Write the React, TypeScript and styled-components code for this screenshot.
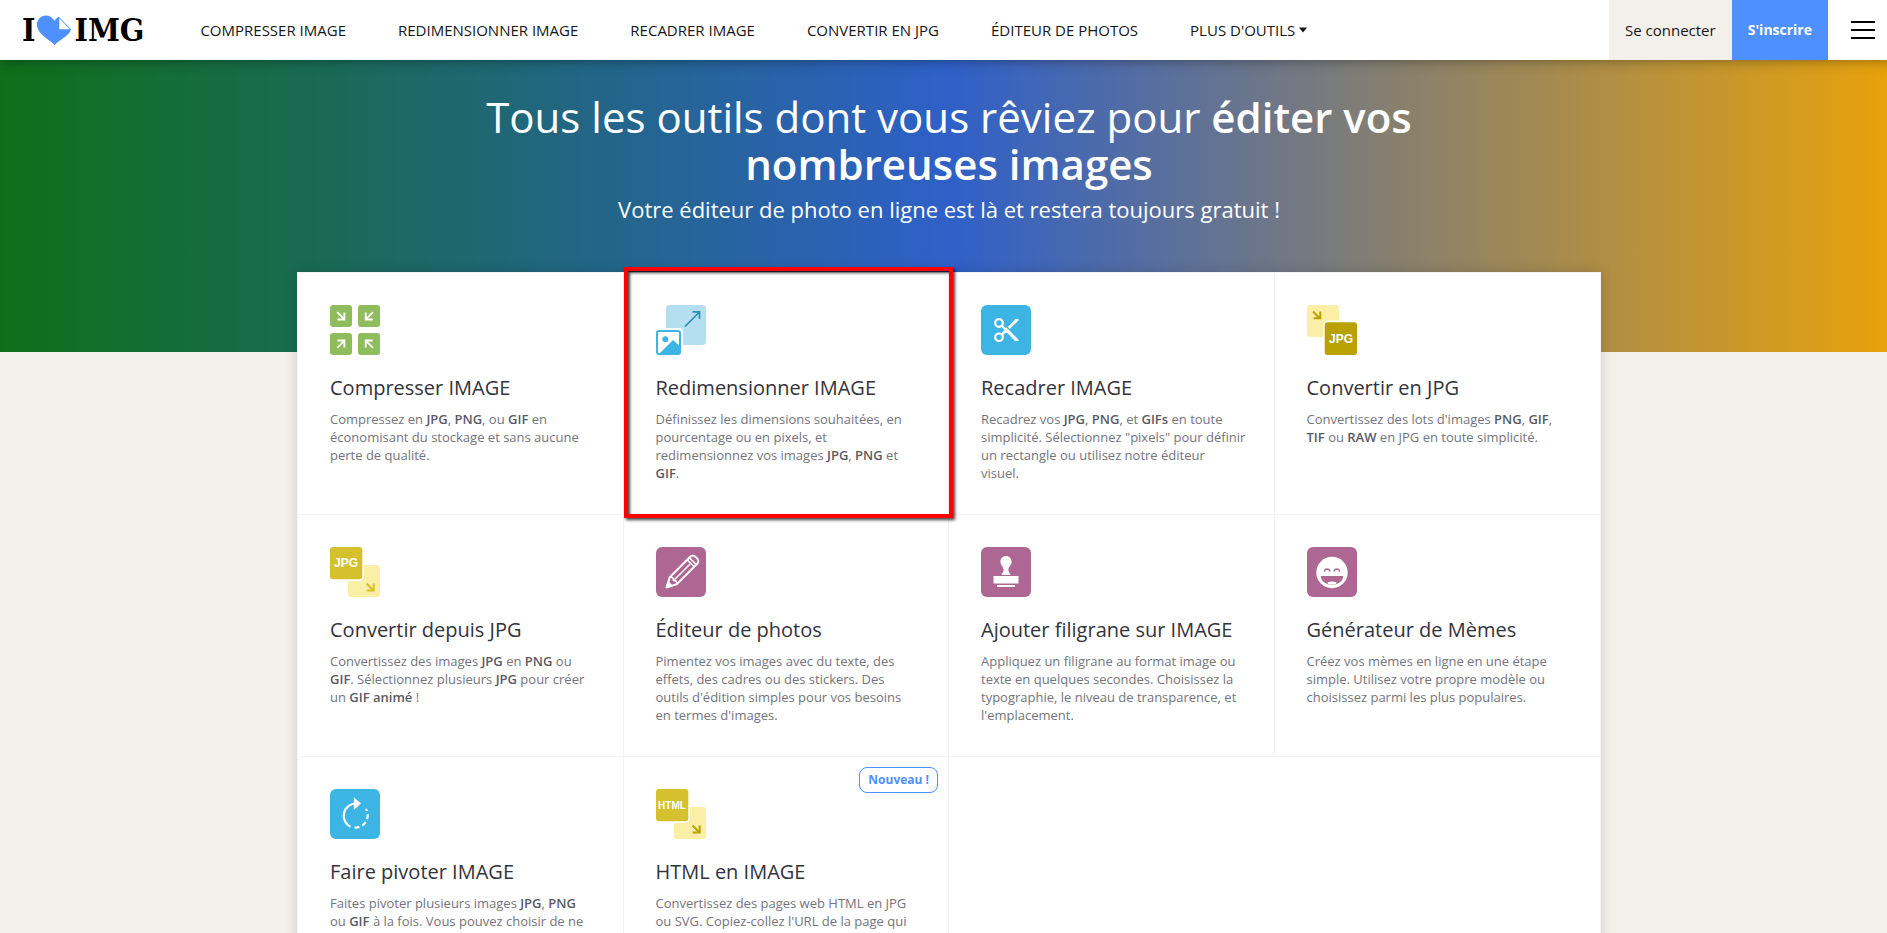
import React from "react";
import styled, { createGlobalStyle } from "styled-components";

const colors = {
  brand: "#4d90fe",
  sand: "#f3f0ec",
  blue: "#3db5e4",
  paleBlue: "#b4dff0",
  inkBlue: "#2b8cb4",
  green: "#8fbc5d",
  purple: "#ad6792",
  mustard: "#d5c02e",
  darkMustard: "#b8a100",
  paleMustard: "#fbeea6",
  line: "#f3f3f3",
};

const GlobalStyle = createGlobalStyle`
  *, *::before, *::after { box-sizing: border-box; }
  body {
    margin: 0;
    overflow-x: hidden;
    background: ${colors.sand};
    font-family: "Open Sans", "Noto Sans", sans-serif;
    color: #161616;
  }
`;

const Page = styled.div`
  width: calc(100% + 11px);
`;

const Header = styled.header`
  position: relative;
  z-index: 2;
  display: flex;
  align-items: stretch;
  height: 60px;
  padding-left: 22px;
  background: #fff;
  box-shadow: 0 0 12px rgba(0, 0, 0, 0.4);
`;

const Logo = styled.a`
  display: flex;
  align-items: center;
  gap: 2px;
  margin-right: 56px;
  color: #000;
  font: 700 32px/60px "DejaVu Serif Condensed", "DejaVu Serif", serif;
  text-decoration: none;
`;

const Nav = styled.nav`
  display: flex;
  flex: 1;
  gap: 52px;
`;

const NavLink = styled.a`
  color: #161616;
  font-size: 15px;
  line-height: 60px;
  text-decoration: none;
  white-space: nowrap;
`;

const NavMenu = styled.button`
  display: flex;
  align-items: center;
  gap: 4px;
  padding: 0;
  border: 0;
  background: none;
  color: #161616;
  font: inherit;
  font-size: 15px;
  line-height: 60px;
  white-space: nowrap;
`;

const AccountLink = styled.a<{ $primary?: boolean }>`
  padding: 0 16px;
  background: ${(p) => (p.$primary ? colors.brand : colors.sand)};
  color: ${(p) => (p.$primary ? "#fff" : "#161616")};
  font-size: ${(p) => (p.$primary ? 14 : 15)}px;
  font-weight: ${(p) => (p.$primary ? 700 : 400)};
  line-height: 60px;
  text-decoration: none;
  white-space: nowrap;
`;

const MenuButton = styled.button`
  display: flex;
  align-items: center;
  justify-content: center;
  width: 70px;
  padding: 0;
  border: 0;
  background: none;
`;

const Hero = styled.section`
  display: flex;
  flex-direction: column;
  align-items: center;
  padding: 33px 24px 127px;
  background: linear-gradient(90deg, #0f6f19 0%, #2f60c8 50%, #e9a30a 100%);
  color: #fff;
  text-align: center;
`;

const HeroTitle = styled.h1`
  max-width: 1040px;
  margin: 0 0 6px;
  font-size: 42px;
  font-weight: 500;
  line-height: 47px;

  strong { font-weight: 600; }
`;

const HeroText = styled.p`
  margin: 0;
  font-size: 22px;
  line-height: 32px;
`;

const ToolGrid = styled.main`
  position: relative;
  display: grid;
  grid-template-columns: repeat(4, 1fr);
  max-width: 1304px;
  margin: -80px auto 0;
  border: 1px solid ${colors.line};
  background: #fff;
  box-shadow: 0 0 12px rgba(0, 0, 0, 0.15);
`;

const ToolCard = styled.a`
  position: relative;
  display: flex;
  flex-direction: column;
  align-items: flex-start;
  padding: 32px 26px 32px 32px;
  border-right: 1px solid ${colors.line};
  border-bottom: 1px solid ${colors.line};
  color: inherit;
  text-decoration: none;

  &:nth-child(4n) { border-right: 0; }
`;

const ToolIcon = styled.svg`
  display: block;
  margin-bottom: 21px;
`;

const ToolName = styled.h2`
  margin: 0 0 10px;
  color: #33333b;
  font-size: 20px;
  font-weight: 500;
  line-height: 24px;
  white-space: nowrap;
`;

const ToolText = styled.p`
  margin: 0;
  color: #74747c;
  font-size: 13px;
  line-height: 18px;
  white-space: pre-line;

  strong {
    color: #5a5a64;
    font-weight: 600;
  }
`;

const NewBadge = styled.span`
  position: absolute;
  top: 10px;
  right: 10px;
  padding: 0 8px;
  border: 1px solid ${colors.brand};
  border-radius: 8px;
  background: #fff;
  color: ${colors.brand};
  font-size: 12px;
  font-weight: 700;
  line-height: 24px;
`;

const Highlight = styled.span`
  position: absolute;
  z-index: 1;
  inset: -6px -5px -4px 0;
  border: 4px solid #f00;
  box-shadow: 2px 2px 3px rgba(0, 0, 0, 0.75), inset 2px 2px 3px rgba(0, 0, 0, 0.75);
  pointer-events: none;
`;

const Icon = ({ children }: { children: React.ReactNode }) => (
  <ToolIcon width="50" height="50" viewBox="0 0 50 50" fill="none" aria-hidden="true">
    {children}
  </ToolIcon>
);

const Tile = ({ color }: { color: string }) => <rect width="50" height="50" rx="6" fill={color} />;

const TileLabel = ({ x, y, size, children }: { x: number; y: number; size: number; children: string }) => (
  <text x={x} y={y} fontSize={size} fontWeight="700" fontFamily="Liberation Sans, sans-serif" fill="#fff" textAnchor="middle">
    {children}
  </text>
);

const CompressIcon = () => (
  <Icon>
    <g fill={colors.green}>
      <rect width="22" height="22" rx="3" />
      <rect x="28" width="22" height="22" rx="3" />
      <rect y="28" width="22" height="22" rx="3" />
      <rect x="28" y="28" width="22" height="22" rx="3" />
    </g>
    <g stroke="#fff" strokeWidth="1.8">
      <path d="M7.2 7.2l7 7M14.4 7.5v7H7.5" />
      <path d="M43 7.2l-7 7M35.7 7.5v7h7" />
      <path d="M7.2 42.8l7-7M14.4 42.5v-7H7.5" />
      <path d="M43 42.8l-7-7M35.7 42.5v-7h7" />
    </g>
  </Icon>
);

const ResizeIcon = () => (
  <Icon>
    <rect x="10" width="40" height="40" rx="4" fill={colors.paleBlue} />
    <path d="M29 21.5L43.5 7M36.5 6.8h7v7" stroke={colors.inkBlue} strokeWidth="1.7" />
    <rect x="-2" y="23" width="29" height="29" rx="4" fill="#fff" />
    <rect x="1" y="26" width="23" height="23" rx="2" stroke={colors.blue} strokeWidth="2" />
    <circle cx="9.3" cy="34.2" r="3" fill={colors.blue} />
    <path d="M3 49L17 35l7 6.5v7.5z" fill={colors.blue} />
  </Icon>
);

const CropIcon = () => (
  <Icon>
    <Tile color={colors.blue} />
    <g stroke="#fff">
      <circle cx="18" cy="18" r="3.8" strokeWidth="2.2" />
      <circle cx="18" cy="32.3" r="3.8" strokeWidth="2.2" />
      <path d="M20.5 29.8l3.5-3.5M20.5 20.5l4.5 4.5" strokeWidth="2.4" />
    </g>
    <path d="M22.5 24L25.5 22.5 37.5 34.5v1.5h-3.5zM34.5 14H37.5v1.5L28.8 24l-2-2zM22.5 26l2-2 2.500 2.500-2 2z" fill="#fff" />
  </Icon>
);

const ToJpgIcon = () => (
  <Icon>
    <rect width="32" height="32" rx="3" fill={colors.paleMustard} />
    <path d="M6 6.5l7 7M13.3 6.5v6.8H6.5" stroke={colors.darkMustard} strokeWidth="2" />
    <rect x="16" y="15.5" width="36" height="37" rx="5" fill="#fff" />
    <rect x="17.7" y="17.3" width="32.3" height="32.7" rx="3" fill={colors.darkMustard} />
    <TileLabel x={34} y={38} size={12}>JPG</TileLabel>
  </Icon>
);

const FromTypeIcon = ({ label, size, arrow }: { label: string; size: number; arrow: string }) => (
  <Icon>
    <rect x="18" y="18" width="32" height="32" rx="3" fill={colors.paleMustard} />
    <path d="M36.5 36.5l7 7M43.7 36.5v7h-7" stroke={arrow} strokeWidth="2" />
    <rect x="-2" y="-2" width="36" height="36" rx="5" fill="#fff" />
    <rect width="32.3" height="32.3" rx="3" fill={colors.mustard} />
    <TileLabel x={16} y={20} size={size}>{label}</TileLabel>
  </Icon>
);

const EditorIcon = () => (
  <Icon>
    <Tile color={colors.purple} />
    <g transform="rotate(-45 25.5 25.5)" stroke="#fff" strokeWidth="2" strokeLinejoin="round">
      <path d="M4.5 25.5L14 20.5H42.5a4 4 0 0 1 4 4v2a4 4 0 0 1-4 4H14z" />
      <path d="M14 20.5c2 1.5 2 3.5 0 5 2 1.5 2 3.500 0 5M15 25.500h23M38.500 20.500v10M41.500 20.500v10" strokeWidth="1.5" />
      <path d="M4.5 25.5l4.5-2.3v4.6z" fill="#fff" />
    </g>
  </Icon>
);

const StampIcon = () => (
  <Icon>
    <Tile color={colors.purple} />
    <path
      d="M25 9c3.3 0 5.6 2.5 5.6 5.7 0 3.8-3.2 4.8-3.2 8 0 2.3 1.4 3.5 2.3 5.3h-9.4c.9-1.8 2.3-3 2.3-5.3 0-3.2-3.2-4.2-3.2-8C19.4 11.5 21.7 9 25 9zM12.5 29h25v7.5h-25zM16 38h18v2H16z"
      fill="#fff"
    />
  </Icon>
);

const MemeIcon = () => (
  <Icon>
    <Tile color={colors.purple} />
    <circle cx="25" cy="25.5" r="15.7" fill="#fff" />
    <path d="M17.3 24.5c.8-3.3 4.8-3.3 5.8 0M26.9 24.5c.8-3.3 4.8-3.3 5.8 0" stroke={colors.purple} strokeWidth="1.4" />
    <path d="M13.8 29h22.4c0 5-5 8.8-11.2 8.8S13.8 34 13.8 29z" fill={colors.purple} />
    <ellipse cx="25" cy="36" rx="4.5" ry="1.5" fill="#fff" />
  </Icon>
);

const RotateIcon = () => (
  <Icon>
    <Tile color={colors.blue} />
    <path d="M26 14.500A12.300 12.300 0 0 0 20.500 37.800" stroke="#fff" strokeWidth="2.2" />
    <path d="M24.500 38.500A12.300 12.300 0 0 0 36 20" stroke="#fff" strokeWidth="2.2" strokeDasharray="5 3" />
    <path d="M23.8 8.3l7.2 6.2-7.2 6.5z" fill="#fff" />
  </Icon>
);

const HeartMark = () => (
  <svg width="35" height="31" viewBox="0 0 35 31" aria-hidden="true">
    <path d="M17.5 30.5C15 25.5 0 20 0 9.5 0 4.5 3.8.5 8.8.5c3.8 0 6.8 2 8.7 5.5 1.2-2 2.5-3.2 4.3-4.2L34 14.3c-1.2 6.7-13.5 11.2-16.5 16.2z" fill={colors.brand} />
    <path d="M22.3 3.2v11h10.6z" fill="#fff" />
  </svg>
);

const navLinks = ["COMPRESSER IMAGE", "REDIMENSIONNER IMAGE", "RECADRER IMAGE", "CONVERTIR EN JPG", "ÉDITEUR DE PHOTOS"];

interface Tool {
  name: string;
  icon: React.ReactNode;
  text: React.ReactNode;
  isNew?: boolean;
  highlighted?: boolean;
}

const B = ({ children }: { children: string }) => <strong>{children}</strong>;

const tools: Tool[] = [
  {
    name: "Compresser IMAGE",
    icon: <CompressIcon />,
    text: <>Compressez en <B>JPG</B>, <B>PNG</B>, ou <B>GIF</B> en{"\n"}économisant du stockage et sans aucune{"\n"}perte de qualité.</>,
  },
  {
    name: "Redimensionner IMAGE",
    icon: <ResizeIcon />,
    text: <>Définissez les dimensions souhaitées, en{"\n"}pourcentage ou en pixels, et{"\n"}redimensionnez vos images <B>JPG</B>, <B>PNG</B> et{"\n"}<B>GIF</B>.</>,
    highlighted: true,
  },
  {
    name: "Recadrer IMAGE",
    icon: <CropIcon />,
    text: <>Recadrez vos <B>JPG</B>, <B>PNG</B>, et <B>GIFs</B> en toute{"\n"}simplicité. Sélectionnez "pixels" pour définir{"\n"}un rectangle ou utilisez notre éditeur{"\n"}visuel.</>,
  },
  {
    name: "Convertir en JPG",
    icon: <ToJpgIcon />,
    text: <>Convertissez des lots d'images <B>PNG</B>, <B>GIF</B>,{"\n"}<B>TIF</B> ou <B>RAW</B> en JPG en toute simplicité.</>,
  },
  {
    name: "Convertir depuis JPG",
    icon: <FromTypeIcon label="JPG" size={12} arrow={colors.mustard} />,
    text: <>Convertissez des images <B>JPG</B> en <B>PNG</B> ou{"\n"}<B>GIF</B>. Sélectionnez plusieurs <B>JPG</B> pour créer{"\n"}un <B>GIF animé</B> !</>,
  },
  {
    name: "Éditeur de photos",
    icon: <EditorIcon />,
    text: <>Pimentez vos images avec du texte, des{"\n"}effets, des cadres ou des stickers. Des{"\n"}outils d'édition simples pour vos besoins{"\n"}en termes d'images.</>,
  },
  {
    name: "Ajouter filigrane sur IMAGE",
    icon: <StampIcon />,
    text: <>Appliquez un filigrane au format image ou{"\n"}texte en quelques secondes. Choisissez la{"\n"}typographie, le niveau de transparence, et{"\n"}l'emplacement.</>,
  },
  {
    name: "Générateur de Mèmes",
    icon: <MemeIcon />,
    text: <>Créez vos mèmes en ligne en une étape{"\n"}simple. Utilisez votre propre modèle ou{"\n"}choisissez parmi les plus populaires.</>,
  },
  {
    name: "Faire pivoter IMAGE",
    icon: <RotateIcon />,
    text: <>Faites pivoter plusieurs images <B>JPG</B>, <B>PNG</B>{"\n"}ou <B>GIF</B> à la fois. Vous pouvez choisir de ne</>,
  },
  {
    name: "HTML en IMAGE",
    icon: <FromTypeIcon label="HTML" size={10} arrow={colors.darkMustard} />,
    text: <>Convertissez des pages web HTML en JPG{"\n"}ou SVG. Copiez-collez l'URL de la page qui</>,
    isNew: true,
  },
];

export default function App() {
  return (
    <>
      <GlobalStyle />
      <Page>
        <Header>
          <Logo href="#">
            <span>I</span>
            <HeartMark />
            <span>IMG</span>
          </Logo>
          <Nav>
            {navLinks.map((label) => (
              <NavLink key={label} href="#">{label}</NavLink>
            ))}
            <NavMenu type="button">
              PLUS D'OUTILS
              <svg width="8" height="6" viewBox="0 0 8 6" aria-hidden="true">
                <path d="M0 .5h8L4 5.5z" fill="#161616" />
              </svg>
            </NavMenu>
          </Nav>
          <AccountLink href="#">Se connecter</AccountLink>
          <AccountLink href="#" $primary>S'inscrire</AccountLink>
          <MenuButton type="button" aria-label="Menu">
            <svg width="24" height="18" viewBox="0 0 24 18" aria-hidden="true">
              <path d="M0 1h24M0 9h24M0 17h24" stroke="#000" strokeWidth="2" />
            </svg>
          </MenuButton>
        </Header>
        <Hero>
          <HeroTitle>
            Tous les outils dont vous rêviez pour <strong>éditer vos nombreuses images</strong>
          </HeroTitle>
          <HeroText>Votre éditeur de photo en ligne est là et restera toujours gratuit !</HeroText>
        </Hero>
        <ToolGrid>
          {tools.map((tool) => (
            <ToolCard key={tool.name} href="#">
              {tool.icon}
              <ToolName>{tool.name}</ToolName>
              <ToolText>{tool.text}</ToolText>
              {tool.isNew && <NewBadge>Nouveau !</NewBadge>}
              {tool.highlighted && <Highlight />}
            </ToolCard>
          ))}
        </ToolGrid>
      </Page>
    </>
  );
}
